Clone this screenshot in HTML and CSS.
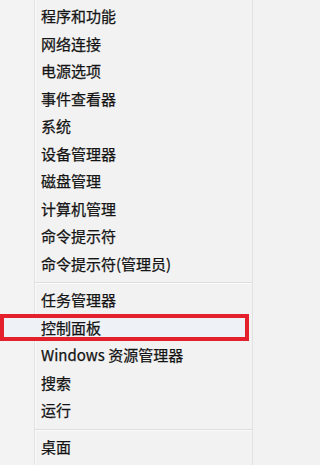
FILE: index.html
```html
<!DOCTYPE html>
<html lang="zh-CN">
<head>
<meta charset="utf-8">
<title>Win+X 菜单</title>
<link rel="stylesheet" href="styles.css">
</head>
<body>
<div class="menu">
  <div class="item">程序和功能</div>
  <div class="item">网络连接</div>
  <div class="item">电源选项</div>
  <div class="item">事件查看器</div>
  <div class="item">系统</div>
  <div class="item">设备管理器</div>
  <div class="item">磁盘管理</div>
  <div class="item">计算机管理</div>
  <div class="item">命令提示符</div>
  <div class="item">命令提示符(管理员)</div>
  <div class="sep"></div>
  <div class="item">任务管理器</div>
  <div class="item item-marked">控制面板</div>
  <div class="item">Windows 资源管理器</div>
  <div class="item">搜索</div>
  <div class="item">运行</div>
  <div class="sep"></div>
  <div class="item">桌面</div>
</div>
</body>
</html>
```
FILE: styles.css
```css
html, body {
  margin: 0;
  padding: 0;
  background: #f2f2f2;
}
.menu {
  width: 253px;
  height: 465px;
  box-sizing: border-box;
  padding-top: 2px;
  border-right: 1px solid #e2e2e2;
  background: linear-gradient(to right, #f3f3f3 0, #f3f3f3 34px, #e2e2e2 34px, #e2e2e2 35px, #fafafa 35px, #fafafa 36px, #f2f2f2 36px);
  font-family: "Noto Sans CJK SC", "Noto Sans", sans-serif;
  font-size: 15px;
  color: #141414;
  -webkit-text-stroke: 0.25px #141414;
}
.item {
  height: 27.5px;
  line-height: 27.5px;
  padding-left: 41px;
  box-sizing: border-box;
  white-space: nowrap;
}
.item-marked {
  width: 249px;
  border: 4px solid #e3202c;
  padding-left: 37px;
  line-height: 19.5px;
  background: #eef1f6;
}
.sep {
  height: 9px;
  margin-left: 35px;
  box-sizing: border-box;
  padding-top: 5px;
}
.sep::before {
  content: "";
  display: block;
  height: 1px;
  background: #dedede;
  border-bottom: 1px solid #fbfbfb;
}
```
